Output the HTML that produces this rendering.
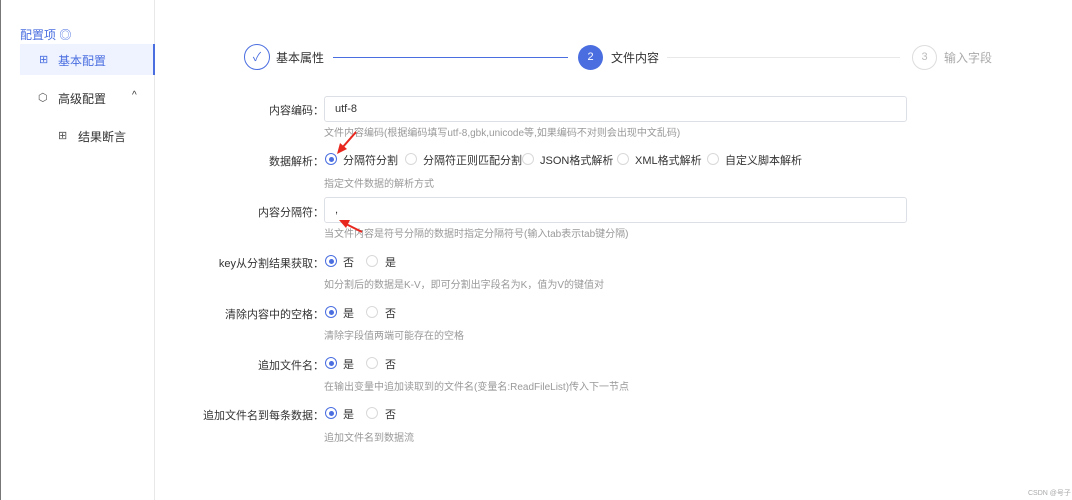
<html><head><style>
body{margin:0;width:1072px;height:500px;background:#fff;font-family:"Liberation Sans","Noto Sans CJK SC",sans-serif;color:#333;position:relative;overflow:hidden}
.a{position:absolute;white-space:nowrap}
.lbl{position:absolute;right:748px;font-size:11px;color:#333}
.hint{position:absolute;left:324px;font-size:10px;color:#999}
.rad{position:absolute;width:12px;height:12px;border:1px solid #d9d9d9;border-radius:50%;box-sizing:border-box;background:#fff}
.rad.on{border-color:#4a6ee0}
.rad.on:after{content:"";position:absolute;left:2.5px;top:2.5px;width:5px;height:5px;border-radius:50%;background:#4a6ee0}
.rt{position:absolute;font-size:11px;color:#333;margin-top:-1px}
.inp{position:absolute;left:324px;width:583px;height:26px;border:1px solid #dcdfe6;border-radius:3px;box-sizing:border-box;font-size:11px;padding:6px 10px}
</style></head><body>
<div class="a" style="left:0;top:0;width:1px;height:500px;background:#777"></div>
<div class="a" style="left:154px;top:0;width:1px;height:500px;background:#e8e8e8"></div>
<div class="a" style="left:20px;top:26px;font-size:12px;color:#4a6ee0">配置项 ◎</div>
<div class="a" style="left:20px;top:44px;width:133px;height:31px;background:#eef3ff;border-right:2px solid #4a6ee0"></div>
<div class="a" style="left:39px;top:53px;font-size:11px;color:#4a6ee0">&#x229E;</div>
<div class="a" style="left:58px;top:52px;font-size:12px;color:#4a6ee0">基本配置</div>
<div class="a" style="left:38px;top:91px;font-size:11px;color:#555">⬡</div>
<div class="a" style="left:58px;top:90px;font-size:12px;color:#333">高级配置</div>
<div class="a" style="left:132px;top:90px;font-size:10px;color:#333">^</div>
<div class="a" style="left:58px;top:129px;font-size:11px;color:#555">&#x229E;</div>
<div class="a" style="left:78px;top:128px;font-size:12px;color:#333">结果断言</div>

<div class="a" style="left:244px;top:44px;width:26px;height:26px;border:1px solid #4a6ee0;border-radius:50%;box-sizing:border-box;color:#4a6ee0;font-size:12px;text-align:center;line-height:24px">✓</div>
<div class="a" style="left:276px;top:49px;font-size:12px">基本属性</div>
<div class="a" style="left:333px;top:57px;width:235px;height:1px;background:#4a6ee0"></div>
<div class="a" style="left:578px;top:45px;width:25px;height:25px;border-radius:50%;background:#4a6ee0;color:#fff;font-size:11px;text-align:center;line-height:25px">2</div>
<div class="a" style="left:611px;top:49px;font-size:12px">文件内容</div>
<div class="a" style="left:667px;top:57px;width:233px;height:1px;background:#e8e8e8"></div>
<div class="a" style="left:912px;top:45px;width:25px;height:25px;border-radius:50%;border:1px solid #ddd;box-sizing:border-box;color:#bbb;font-size:11px;text-align:center;line-height:23px">3</div>
<div class="a" style="left:944px;top:49px;font-size:12px;color:#aaa">输入字段</div>

<div class="lbl" style="top:102px">内容编码：</div>
<div class="inp" style="top:96px">utf-8</div>
<div class="hint" style="top:124px">文件内容编码(根据编码填写utf-8,gbk,unicode等,如果编码不对则会出现中文乱码)</div>

<div class="lbl" style="top:153px">数据解析：</div>
<div class="rad on" style="left:325px;top:153px"></div><div class="rt" style="left:343px;top:153px">分隔符分割</div>
<div class="rad" style="left:405px;top:153px"></div><div class="rt" style="left:423px;top:153px">分隔符正则匹配分割</div>
<div class="rad" style="left:522px;top:153px"></div><div class="rt" style="left:540px;top:153px">JSON格式解析</div>
<div class="rad" style="left:617px;top:153px"></div><div class="rt" style="left:635px;top:153px">XML格式解析</div>
<div class="rad" style="left:707px;top:153px"></div><div class="rt" style="left:725px;top:153px">自定义脚本解析</div>
<div class="hint" style="top:175px">指定文件数据的解析方式</div>

<div class="lbl" style="top:204px">内容分隔符：</div>
<div class="inp" style="top:197px">,</div>
<div class="hint" style="top:225px">当文件内容是符号分隔的数据时指定分隔符号(输入tab表示tab键分隔)</div>

<div class="lbl" style="top:255px">key从分割结果获取：</div>
<div class="rad on" style="left:325px;top:255px"></div><div class="rt" style="left:343px;top:255px">否</div>
<div class="rad" style="left:366px;top:255px"></div><div class="rt" style="left:385px;top:255px">是</div>
<div class="hint" style="top:276px">如分割后的数据是K-V，即可分割出字段名为K，值为V的键值对</div>

<div class="lbl" style="top:306px">清除内容中的空格：</div>
<div class="rad on" style="left:325px;top:306px"></div><div class="rt" style="left:343px;top:306px">是</div>
<div class="rad" style="left:366px;top:306px"></div><div class="rt" style="left:385px;top:306px">否</div>
<div class="hint" style="top:327px">清除字段值两端可能存在的空格</div>

<div class="lbl" style="top:357px">追加文件名：</div>
<div class="rad on" style="left:325px;top:357px"></div><div class="rt" style="left:343px;top:357px">是</div>
<div class="rad" style="left:366px;top:357px"></div><div class="rt" style="left:385px;top:357px">否</div>
<div class="hint" style="top:378px">在输出变量中追加读取到的文件名(变量名:ReadFileList)传入下一节点</div>

<div class="lbl" style="top:407px">追加文件名到每条数据：</div>
<div class="rad on" style="left:325px;top:407px"></div><div class="rt" style="left:343px;top:407px">是</div>
<div class="rad" style="left:366px;top:407px"></div><div class="rt" style="left:385px;top:407px">否</div>
<div class="hint" style="top:429px">追加文件名到数据流</div>

<svg class="a" style="left:0;top:0" width="1072" height="500">
<g stroke="#e8281e" stroke-width="2" fill="#e8281e">
<line x1="356" y1="132" x2="342" y2="148"/><polygon points="337,154 340,143 347,149" stroke="none"/>
<line x1="362" y1="232" x2="346" y2="224"/><polygon points="339,220 350,220 346,228" stroke="none"/>
</g></svg>
<div class="a" style="left:1028px;top:488px;font-size:7px;color:#aaa">CSDN @号子</div>
</body></html>
